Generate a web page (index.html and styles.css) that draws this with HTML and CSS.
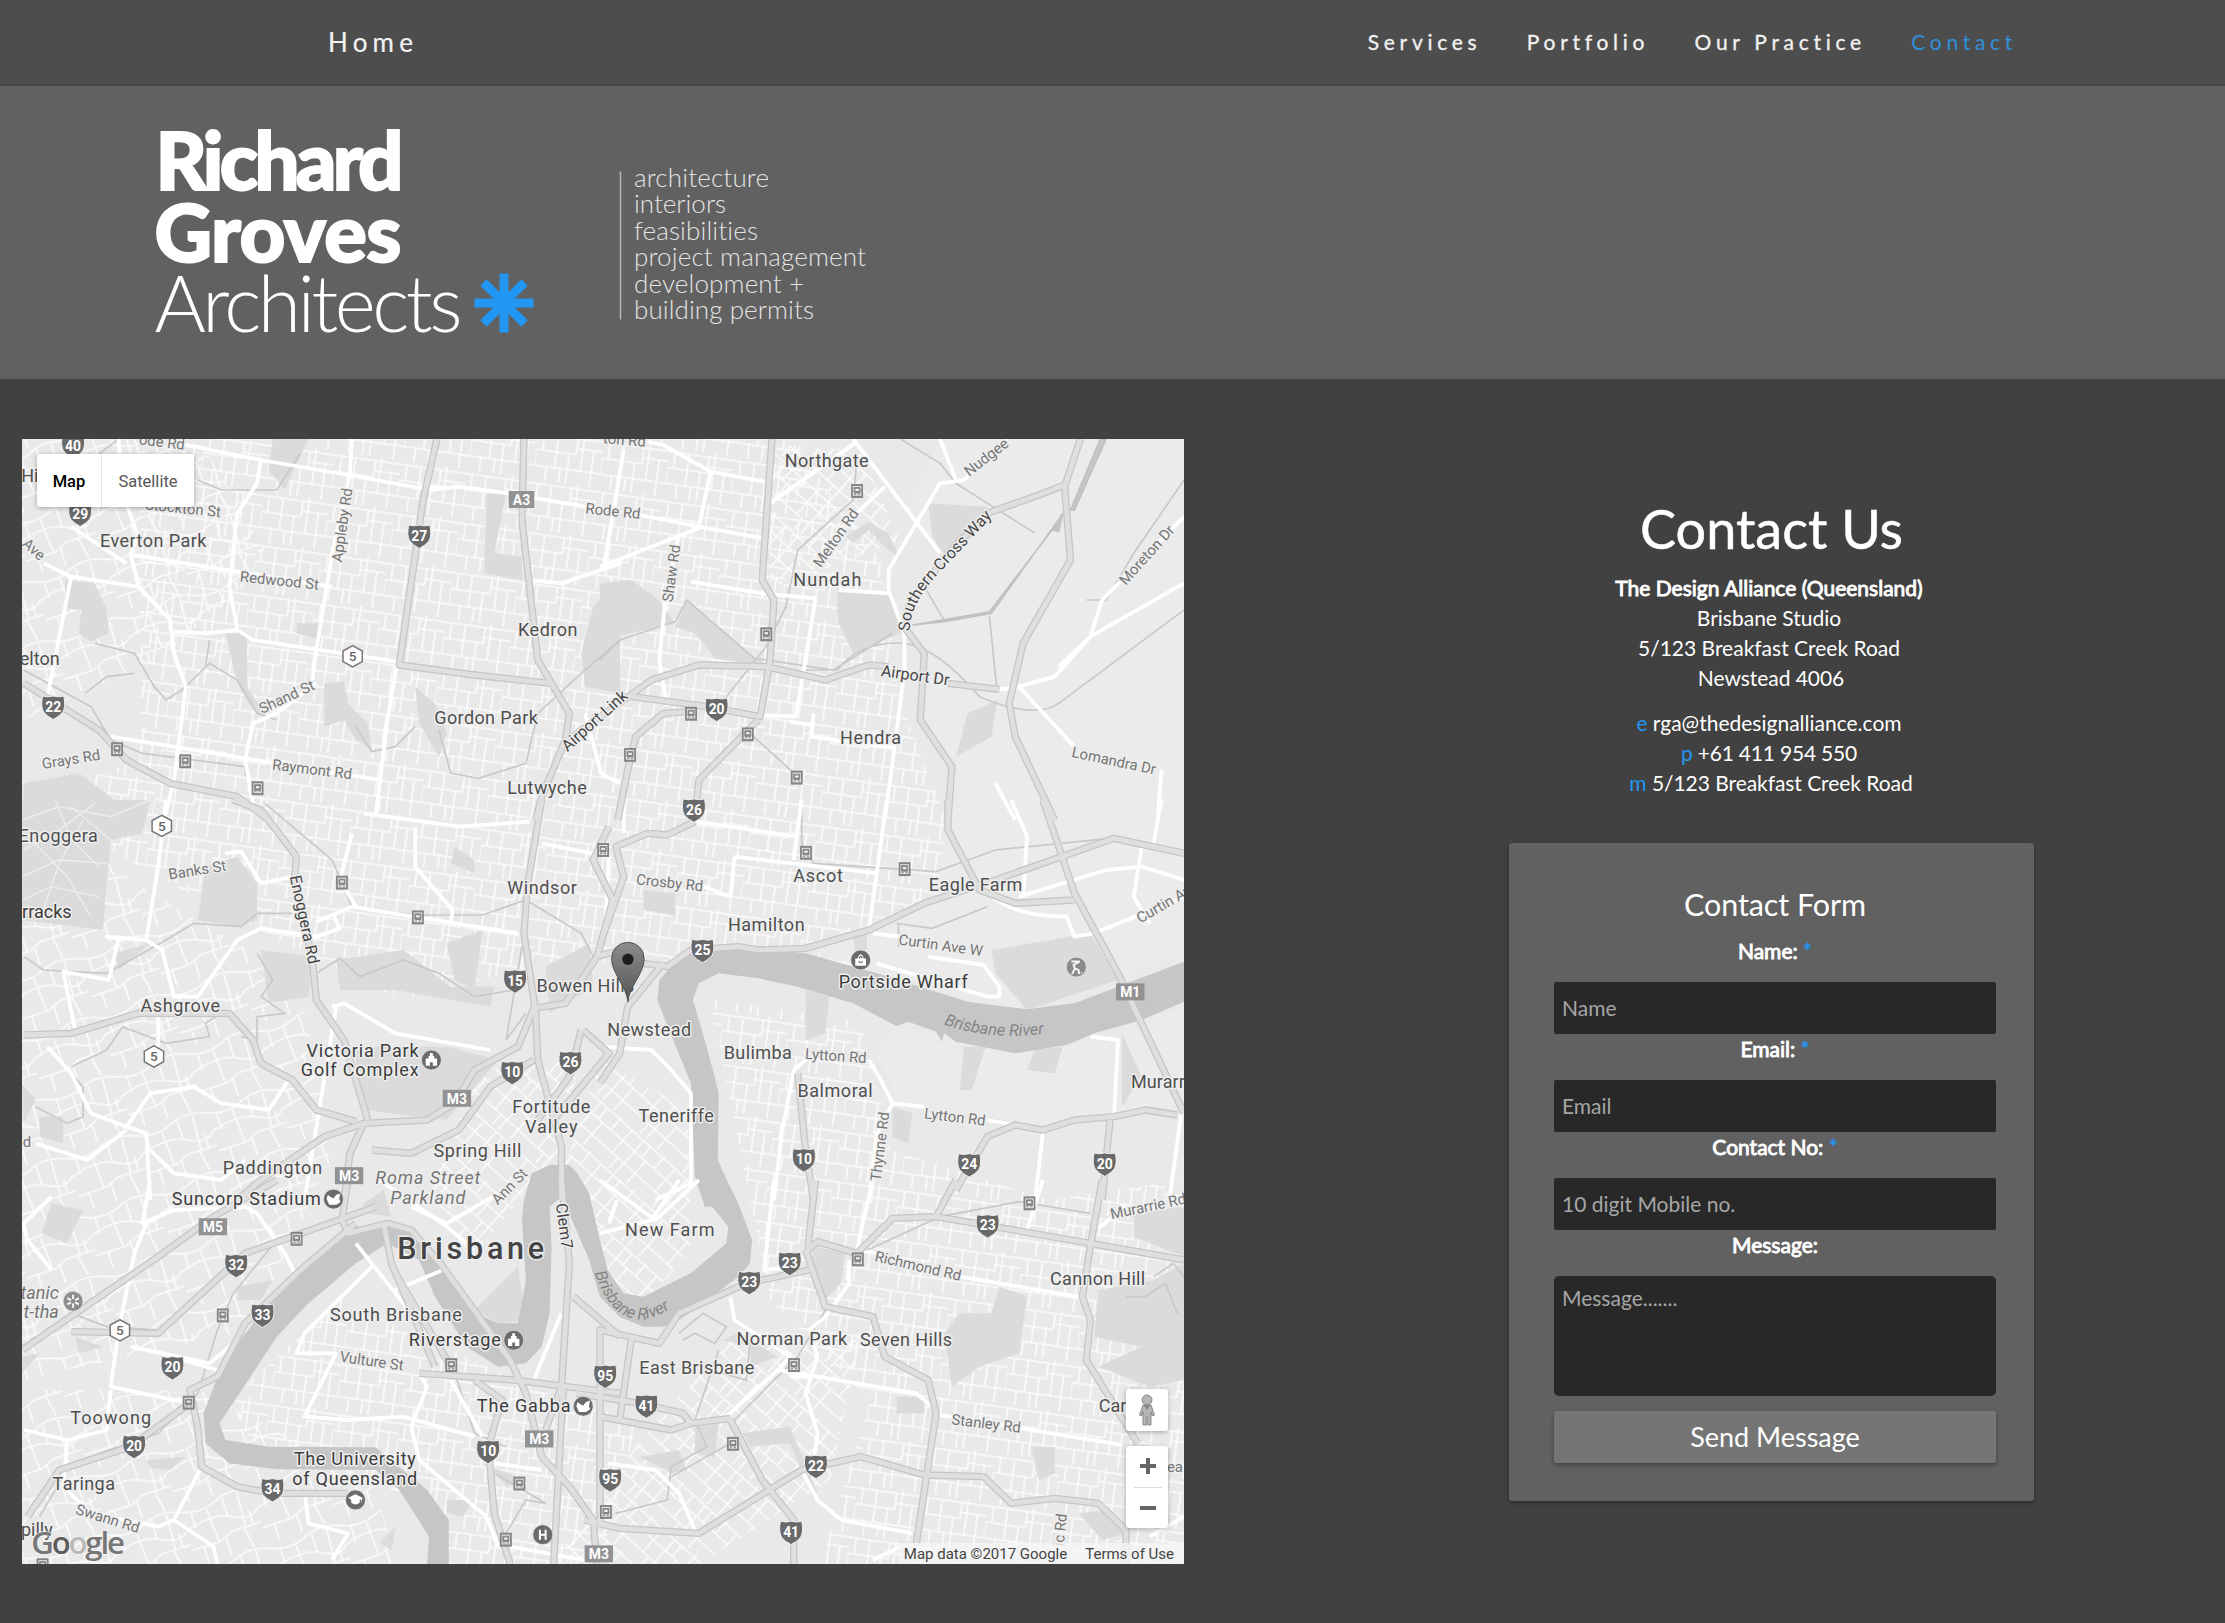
FILE: index.html
```html
<!DOCTYPE html>
<html lang="en">
<head>
<meta charset="utf-8">
<title>Richard Groves Architects - Contact</title>
<link rel="stylesheet" href="styles.css">
</head>
<body>
<nav class="nav">
  <a class="nav-home" href="#">Home</a>
  <div class="nav-links">
    <a href="#">Services</a><a href="#">Portfolio</a><a href="#">Our Practice</a><a class="active" href="#">Contact</a>
  </div>
</nav>
<header class="hero">
  <svg class="logo" width="800" height="293" viewBox="100 86 800 293">
    <g class="logo-bold">
      <text x="155.500" y="189.800" textLength="248" lengthAdjust="spacing">Richard</text>
      <text x="154.500" y="262.300" textLength="247" lengthAdjust="spacing">Groves</text>
    </g>
    <text class="logo-thin" x="154.500" y="332" textLength="308" lengthAdjust="spacing">Architects</text>
    <g class="star"><path d="M504 273.500v59M474.500 303h59M483.500 282.500l41 41M524.500 282.500l-41 41"/></g>
    <path class="rule" d="M620.500 171.500v148"/>
    <g class="services">
      <text x="634" y="187" textLength="135">architecture</text>
      <text x="634" y="213" textLength="92">interiors</text>
      <text x="634" y="239.500" textLength="124">feasibilities</text>
      <text x="634" y="266" textLength="232">project management</text>
      <text x="634" y="292.500" textLength="170">development +</text>
      <text x="634" y="318.600" textLength="180">building permits</text>
    </g>
  </svg>
</header>
<main class="main">
  <section class="map">
    <svg class="map-canvas" width="1162" height="1125" viewBox="22 439 1162 1125">
      <defs>
        <pattern id="s1" width="66" height="50" patternUnits="userSpaceOnUse" patternTransform="rotate(8)"><path class="st" d="M0 4H66M0 20H40M40 14H66M0 36H66M6 4V20M20 4V36M33 20V50M46 0V36M57 14V50M12 36V50M40 4V20M26 36V50M0 20V36"/></pattern>
        <pattern id="s2" width="58" height="46" patternUnits="userSpaceOnUse" patternTransform="rotate(42)"><path class="st" d="M0 3H58M0 17H58M0 33H58M8 3V33M24 3V46M39 17V46M50 0V17M16 33V46M33 3V17"/></pattern>
        <pattern id="s3" width="74" height="62" patternUnits="userSpaceOnUse" patternTransform="rotate(-18)"><path class="st" d="M0 6Q20 14 37 6T74 6M0 26Q30 16 48 26T74 26M0 46H30L44 40H74M10 10V26M26 11L28 46M44 5V24M60 4L58 40M12 46V62M36 43V62M56 40L60 62M66 26V40"/></pattern>
        <path id="shield" d="M-10-10Q-5-8.500 0-10Q5-8.500 10-10Q12 0 9 5Q6 9 0 12Q-6 9-9 5Q-12 0-10-10z"/>
        <path id="hex" d="M0-11L10-5.500V5.500L0 11L-10 5.500V-5.500z"/>
        <g id="train"><rect x="-6" y="-7" width="12" height="14" fill="#858585"/><rect x="-4.200" y="-5" width="8.400" height="9.800" fill="#e9e9e9"/><path d="M-3-3.500H3V2H-3zM-3 3.500h2M1 3.500h2" fill="#858585" stroke="#858585"/><path d="M-1.800-2.200H1.800V0H-1.800z" fill="#eee"/></g>
        <g id="hw">
          <g transform="translate(0 420) scale(.39541 .33333)">
            <path d="M1325 57L1320 300L1345 560L1360 720L1400 800L1440 880L1430 960L1370 1130L1355 1200"/><path d="M1105 57L1070 240L1010 735L1200 765L1390 790"/><path d="M60 790L250 930L320 1020L430 1090L600 1130L680 1200"/>
          </g>
          <g transform="translate(600 420) scale(.39541 .33333)">
            <path d="M435 57L410 480L440 540L430 720L405 890L270 860L80 830"/><path d="M400 900L250 1080L240 1200"/><path d="M230 875L160 880L90 950L70 1050L45 1200"/><path d="M-80 960L0 890L130 780L250 735L420 740L570 780L680 735L730 740M880 790L1010 808"/><path d="M980 280L880 400L780 560L775 630L820 700L810 900L890 1040L880 1200"/><path d="M1215 57L1175 200L1190 420L1070 670L1035 850L1050 950L1150 1200M980 280L1110 225L1175 195"/>
          </g>
          <g transform="translate(0 800) scale(.39541 .33333)">
            <path d="M1370 0L1335 250L1325 400L1355 640L1360 780L1420 1040V1200"/><path d="M1568 450L1510 470L1430 610L1350 625L1310 740L1200 810L1150 910L1080 960L920 970L820 1010L660 1140L600 1200"/><path d="M920 970L885 1060L870 1200"/><path d="M590 0L660 30L750 170L745 230L790 480L800 600L870 720L930 960"/><path d="M60 705L180 700L350 640H580L640 720L660 790L740 840L800 930L900 965"/><path d="M1510 470L1550 300L1500 180L1540 80M1470 690L1440 830L1360 960M1475 690L1540 760L1400 960M1350 780L1240 860L1160 990L1040 1060L940 1050"/>
          </g>
          <g transform="translate(600 800) scale(.39541 .33333)">
            <path d="M880 0V90L960 270L1050 310L1200 300"/><path d="M1120 0L1200 280L1310 520L1477 940"/><path d="M1477 160L1300 115L1000 240L820 310L680 390L520 445L400 450L350 440L230 450L170 500L110 490"/><path d="M240 65L170 105L120 100L40 140L60 230L10 400"/><path d="M900 1170L980 1010L1050 975L1120 990L1200 960L1300 950L1380 930L1460 945"/><path d="M1290 960L1270 1200M500 820L520 1050L540 1200M160 490L70 620L50 760L0 850"/>
          </g>
          <g transform="translate(0 1180) scale(.39541 .33333)">
            <path d="M700 0L540 110L400 230L56 510"/><path d="M880 0L865 120L880 160L980 130L1040 150L1120 260L1290 540L1330 640L1370 830L1440 920L1500 1020L1510 1152"/><path d="M1420 0L1440 250L1420 620L1380 750M1425 620L1400 1152"/><path d="M950 80L880 110L620 220L400 460L180 455"/><path d="M900 130L760 270L620 430L550 590L480 630L500 740L510 860L600 920L690 940L880 940"/><path d="M480 670L330 800L150 870L70 1010"/><path d="M1060 580L1300 600L1568 640M1200 600L1270 660L1235 800L1250 1000L1290 1152"/><path d="M970 130L990 250L1100 560M1000 280L1060 400L1140 560M1568 470L1450 350"/>
          </g>
          <g transform="translate(600 1180) scale(.39541 .33333)">
            <path d="M900 0L850 110L740 115L650 220L550 185L525 210L545 0"/><path d="M850 110L1240 190L1477 240"/><path d="M1270 0L1240 200L1220 350L1240 420L1230 540L1360 790"/><path d="M520 210L570 380L690 410L720 530L830 600L850 700L800 1090"/><path d="M530 270L370 310L200 400L150 490L0 450V1040"/><path d="M80 470L50 720M330 720L410 900L490 1020V1152"/><path d="M-60 640L100 670L210 700L230 730L180 750L0 710M230 730L330 715"/><path d="M-40 1020L50 1045L250 1060L510 870L660 830L820 885L970 890L1040 970L1150 955L1260 970L1330 1050V1152"/>
          </g>
        </g>
      </defs>
      <rect x="22" y="439" width="1162" height="1125" fill="#e9e9e9"/>
      <!-- local streets -->
      <path fill="url(#s1)" d="M140 439H790L880 560L900 700L1000 960L780 970L560 960L400 1000L200 900L22 800L140 760z"/>
      <path fill="url(#s3)" d="M22 439H200L270 560L160 660L22 720zM22 780L130 880L300 980L330 1160L250 1330L22 1380zM22 1390H200L370 1480L400 1564H22z"/>
      <path fill="url(#s2)" d="M770 445L860 450L900 540L770 590zM600 1060L690 1110V1250L640 1310L590 1270L560 1180zM480 1070L580 1060L560 1150L470 1260L430 1190zM740 1330L860 1340L830 1480L700 1564H550L640 1440z"/>
      <path fill="url(#s1)" d="M710 1000L860 1020L890 1150L1050 1200L1184 1180V1564H820L870 1400L770 1300zM340 1300L560 1400L640 1420L600 1564H440L420 1500L250 1440L230 1400z"/>
      <!-- parks and open land -->
      <g class="open">
        <g transform="translate(600 420) scale(.39541 .33333)"><path d="M860 57H1477V1200H900L890 1040L810 900L820 700L770 560L850 400L780 260z"/></g>
        <g transform="translate(600 800) scale(.39541 .33333)"><path d="M890 0H1477V460L1080 630L700 520L520 440L850 300zM750 680L1050 760L1300 710L1477 620V930L1120 980L760 910L700 760z"/></g>
      </g>
      <g class="park">
        <g transform="translate(0 420) scale(.39541 .33333)"><path d="M690 57H780L720 210L680 150zM1230 220H1280L1250 400L1320 410V480L1225 460zM165 480L240 490L270 570L275 640L230 665L200 640L205 570L165 565zM570 640H625V800L680 900L640 870L600 790zM820 790L870 785L880 850L930 910L940 990L900 960L870 900L820 920zM1050 800L1100 850L1130 940L1110 1010L1060 910zM1500 560L1568 480V820L1480 800L1470 700zM60 1090L200 1060L280 1130L320 1200H56zM750 610H810V660L750 640z"/></g>
        <g transform="translate(600 420) scale(.39541 .33333)"><path d="M0 490L80 480L150 540L190 610L40 650L0 720zM220 540L390 710L430 740L290 715L240 640L190 620zM600 515H740L760 640L640 700L600 600zM830 250L980 260V300L880 420L840 350zM930 880L1005 840L990 950L900 1010zM620 350L680 305L730 340L760 420L720 380L680 330L640 370z"/></g>
        <g transform="translate(0 800) scale(.39541 .33333)"><path d="M56 0H380L360 100L280 120L260 390L56 360zM520 200L600 170L650 250V360L600 380L500 360zM290 460L380 430L300 510zM1130 430L1220 390L1200 570L1150 540zM660 450L790 470L780 590L680 610zM850 480L1020 450L1140 560L1250 560L1240 620L1000 570L860 570zM900 740L1130 740L1260 780L1130 960L920 930L900 840zM1380 500L1490 430L1500 560L1390 640zM56 850L90 900L60 970zM100 950H160V1030L100 1010zM1150 140L1200 180V220L1140 190z"/></g>
        <g transform="translate(600 800) scale(.39541 .33333)"><path d="M990 450L1240 400L1310 540L1080 630L1000 520zM520 570L580 590L570 700L520 720zM920 740H975L940 870H910zM1100 750L1170 740L1150 820L1080 810zM740 920L790 940L780 1030L740 1010zM110 270L190 280V345L110 330zM1320 700L1370 830L1320 920zM640 400H675V450H645z"/></g>
        <g transform="translate(0 1180) scale(.39541 .33333)"><path d="M130 70L210 90L170 190L105 160zM600 320L690 300L660 360L600 360zM920 70L970 30L990 110L920 100zM1310 260L1330 420L1260 430L1200 390zM56 530L100 520L56 580zM370 840L470 830L430 870L380 865zM1130 960H1200L1170 1010L1130 1000zM960 1090L1000 1040L990 1110zM1240 860L1330 900L1280 920zM190 470L260 500L200 520z"/></g>
        <g transform="translate(600 1180) scale(.39541 .33333)"><path d="M1010 320L1080 350L1060 520L960 560L890 620L870 460L910 400H990zM1260 330L1400 300L1477 250V600L1390 620L1260 560L1370 500L1250 470zM1350 100L1477 80V230L1350 170zM540 200L620 220L610 310L560 370L530 270zM310 480L380 500V560L450 530L350 460zM100 830L200 810L220 870L180 880zM1210 1000L1290 990L1330 1060L1270 1080zM1090 800H1150V880L1110 900zM360 760L480 740L550 940L520 900L480 790L380 800zM750 650H820V700H750zM240 740L300 730L290 830L240 820z"/></g>
      </g>
      <!-- tracks through the barracks reserve -->
      <g class="trail" transform="translate(0 800) scale(.39541 .33333)"><path d="M56 60L150 20L280 50L380 0M60 150L140 100L240 10M140 0L180 120L250 200M56 230L150 180L270 190M80 120L170 230L230 350M210 60L150 190L100 360M56 300L130 260L250 290M180 20L280 120"/></g>
      <!-- Brisbane River -->
      <g class="river">
        <g transform="translate(600 800) scale(.39541 .33333)"><path d="M165 520L210 455L370 440L520 460L700 520L930 605L1080 628L1200 610L1400 520L1477 485V605L1370 660L1250 700L1180 735L1050 760L900 725L870 700L865 725L850 695L780 665L750 678L640 610L500 560L400 535L300 520L250 550L235 600L260 700L290 830L300 880L298 1080L350 1220H265L240 1130L230 850L185 720L145 600L150 540z"/></g>
        <g transform="translate(0 1180) scale(.39541 .33333)"><path d="M1757-20L1787 60L1842 140L1837 190L1747 280L1627 350L1577 340L1537 270L1517 180L1490 40L1460-20L1440-45H1390L1345-20L1325 60L1320 120L1330 300L1310 430H1260L1200 400L1120 240L1050 150L1000 130L900 150L850 190L700 340L640 430L560 560L515 700L520 790L580 850L700 868L950 870L1010 930L1085 1070L1080 1152H1135V1020L1080 930L950 802L680 800L570 780L555 730L600 650L700 470L780 370L900 250L980 190L1060 240L1100 350L1180 500L1260 560L1330 550L1370 500L1390 400L1395 200L1390 80L1420 50L1450 130L1490 240L1517 350L1567 410L1627 440H1677L1717 420L1767 380L1867 290L1897 250L1902 180L1867 70L1830-20z"/></g>
        <g transform="translate(600 420) scale(.39541 .33333)"><path d="M1265 57H1280L1200 270H1190zM1170 280L1160 335L1145 330zM1165 290L990 580L870 605L790 615L865 600L985 575L1150 320z" stroke="#c0c0c0" stroke-width="1.500"/></g>
      </g>
      <!-- railways and creeks -->
      <g class="rail">
        <g transform="translate(0 420) scale(.39541 .33333)"><path d="M300 57L140 200M500 180L560 210L700 210L760 100M240 670L340 700L390 800L420 840L460 810L530 730L600 780L650 880L700 900M215 820L270 770L340 760M60 750L230 860L280 960L360 1000L620 1040V1070M530 660L520 740M900 920L940 995L1000 980L1050 920M1110 930L1140 1060L1210 1075L1330 1030L1360 880L1470 760L1568 660"/></g>
        <g transform="translate(600 420) scale(.39541 .33333)"><path d="M650 120L640 240L500 390L470 560L420 680L300 860M0 720L50 660L190 605L220 540L390 715L590 750L740 640M370 930L500 1070M520 750H600Q660 660 770 670Q850 680 960 830Q1100 900 1160 850L1477 570M760 57L860 130L900 190L1100 340M985 590L1003 800M820 500L870 600M1477 180L1350 400L1280 540H1230"/></g>
        <g transform="translate(0 800) scale(.39541 .33333)"><path d="M670 10L840 180L890 320L1050 345L1220 345L1330 300L1470 400L1500 470M60 470L110 510L270 520L420 420L490 370L610 380L650 340L740 340M800 520L860 475L910 530L1020 480L1110 520L1200 590L1300 570M650 460L690 540L660 590L720 640L650 650V720L610 710M180 800L270 750L310 680L420 730L530 710L520 670L560 640M90 920L170 970L210 950V860L120 740M1330 640L1280 720L1320 440"/></g>
        <g transform="translate(600 800) scale(.39541 .33333)"><path d="M510 0L510 130L540 190L850 215L1000 150L1290 115M750 370L840 385L980 320M755 370V440"/></g>
        <g transform="translate(0 1180) scale(.39541 .33333)"><path d="M700 180L590 340L550 450L500 640L400 760L180 850L100 1010M180 400L270 440L400 450M1150 580L1200 760L1280 800M1250 880L1380 970L1330 960L1280 1060"/></g>
        <g transform="translate(600 1180) scale(.39541 .33333)"><path d="M640 230L860 110L1060 65L1240 100M570 390L500 530L340 720M200 460L260 400L320 440L290 490L240 460L210 480M380 480L370 600L310 580M300 510L240 720L270 800L180 860L170 960L40 1000M180 890L330 790M1400 290L1450 250L1477 290M1330 350L1380 350L1430 310L1460 400"/></g>
      </g>
      <!-- main streets -->
      <g class="art">
        <g transform="translate(0 420) scale(.39541 .33333)"><path d="M300 57L310 220L350 350L330 400L350 500L430 600L440 700L470 800L440 1080L415 1200M890 57L885 160L840 400L800 690L790 780M470 75L660 120L880 165L1090 210L1160 200L1285 220L1480 260M180 320L320 430M335 405L840 500M110 430L180 470L350 500M180 470L120 830M660 120L650 190L600 280L580 500L600 630M440 635L520 640L600 630L640 660L1005 725L980 900L950 1190M1340 480L1420 490L1568 430M280 950L440 980L620 1015L960 1080M800 790L700 880L640 910L620 1020L640 1150M1480 880L1520 1060L1568 1090M1060 200L1150 205"/></g>
        <g transform="translate(600 420) scale(.39541 .33333)"><path d="M120 65L160 75L280 155L415 185M100 285L250 320L415 355M0 440L250 325M280 155L250 320M60 90L10 440M200 340L165 540L150 720L170 860M230 485L410 520L545 535L515 750L495 890L405 885M430 250L650 65M640 57L860 400M720 200L640 290M1030 57L920 180L860 190L730 450L730 510L770 640V750L745 980L720 1200M605 510L730 520M540 880L535 950L745 985M480 905L535 915M860 57L900 180M1477 290L1270 540L1240 650L1150 770L1060 800L1010 808M1477 490L1240 650L1160 740M1060 800L1200 980M1420 1050L1410 1200M1000 1090L1050 1200"/></g>
        <g transform="translate(0 800) scale(.39541 .33333)"><path d="M420 0L400 200L370 420L270 410L300 415L275 540L160 515L190 690M370 420L410 450L440 590L500 590L600 420L660 385L800 410L860 385L845 350M570 160L610 155L660 250L740 230M800 365L890 320L1310 400M890 100L860 240L900 320M920 40L1160 80L1340 65M1050 80V200L1145 330L1140 370M1370 130L1540 170L1530 400M840 620L870 610L1000 700L1240 750M850 620L770 1200M120 740L180 820L230 940L320 980L370 1000L380 1200M320 980L380 880L490 860L560 910L680 930L730 840M90 1030L220 1080L320 990M400 600V740M380 1050L440 1120L560 1140L620 1080"/></g>
        <g transform="translate(600 800) scale(.39541 .33333)"><path d="M510 0L490 180M340 170L700 220L725 0M245 65L500 110M340 170L330 290L240 250M700 220L680 390M1040 0L1080 110L1070 290M60 0L60 100M1060 290L1280 210L1370 200L1477 240M1370 140L1350 290L1390 370M970 270Q1040 350 1180 350L1200 410L1250 400L1477 290M690 400L760 410M830 470L970 495L1010 560V590L980 590L700 490M490 810L460 1000L440 1200M490 810L530 770M680 780L710 840L740 910L820 920M980 960L1050 975M740 910L700 1000L680 1200M1120 1000L1100 1200M1420 0L1400 130M1470 940L1440 1200M0 740L130 750L180 810L230 880V1150L140 1200M1240 710L1310 720L1300 950"/></g>
        <g transform="translate(0 1180) scale(.39541 .33333)"><path d="M380 0L360 130L440 90L620 80L650 100L720 220L750 290M370 130L340 220L300 450L280 620L460 665M70 190L60 130L130 50M130 270L70 180M960 0L1130 140L1200 210M900 190L1060 430L1140 560M940 260L770 460L750 520L850 520L770 710L880 720L1020 710L1200 770M1060 580L1080 620L1040 740L1060 840L1230 1010L1260 1100M1140 600L1220 770M460 540L550 570M60 750L170 780L270 750L280 630M330 500L530 550L590 490M170 780L160 920L230 1000L400 1040L440 1020L510 860M440 1020L540 1100L550 1152M770 930L780 1030L880 1060L840 1140M1250 850L1370 870M1290 1100L1480 1140M1420 400L1350 600M1000 330L1120 270M1560 60L1540 130M1040 80L1130 130L1260 40"/></g>
        <g transform="translate(600 1180) scale(.39541 .33333)"><path d="M440 0L415 270L500 260M690 0L650 210L700 220M630 240V310L570 410L530 450L550 530L520 640L550 760L540 850M330 350L340 420L480 530L450 570L800 640L840 680M450 570L310 720M860 705L1320 795M910 290L1210 350M1120 0L1080 150M1260 145L1330 80M20 850L140 870L200 940L240 1050M510 870L550 960L610 1020L790 1060M0 160L130 120L200 0M0 0L140 120L250 0M690 1140L760 1100M1390 1070L1477 1010M480 590H540"/></g>
      </g>
      <use href="#hw" class="casing"/>
      <use href="#hw" class="roadway"/>
      <g transform="scale(1.41903)">
        <!-- street names -->
        <g class="lbl-road">
          <text transform="translate(114 312) rotate(7)" y="3">ode Rd</text><text transform="translate(432 360) rotate(6)" y="3.700">Rode Rd</text><text transform="translate(440 310.500) rotate(5)" y="3">ton Rd</text>
          <text transform="translate(129 358) rotate(6)" y="3.700">Stockton St</text><text transform="translate(241 370) rotate(-82)" y="3.700">Appleby Rd</text><text transform="translate(197 409) rotate(6)" y="3.700">Redwood St</text>
          <text transform="translate(24 387) rotate(42)" y="3.700">Ave</text><text transform="translate(202 491) rotate(-25)" y="3.700">Shand St</text><text transform="translate(50 535) rotate(-9)" y="3.700">Grays Rd</text><text transform="translate(220 542) rotate(7)" y="3.700">Raymont Rd</text>
          <text transform="translate(473 404) rotate(-82)" y="3.700">Shaw Rd</text><text transform="translate(589 379) rotate(-55)" y="3.700">Melton Rd</text><text transform="translate(695 322) rotate(-38)" y="3.700">Nudgee</text><text transform="translate(808 391) rotate(-48)" y="3.700">Moreton Dr</text><text transform="translate(785 536) rotate(12)" y="3.700">Lomandra Dr</text>
          <text transform="translate(139 613) rotate(-9)" y="3.700">Banks St</text><text transform="translate(472 622) rotate(6)" y="3.700">Crosby Rd</text><text transform="translate(663 666) rotate(8)" y="3.700">Curtin Ave W</text><text transform="translate(820 637) rotate(-30)" y="3.700">Curtin Av</text>
          <text transform="translate(589 744) rotate(4)" y="3.700">Lytton Rd</text><text transform="translate(673 787) rotate(7)" y="3.700">Lytton Rd</text><text transform="translate(620 808) rotate(-83)" y="3.700">Thynne Rd</text><text transform="translate(809 850) rotate(-12)" y="3.700">Murarrie Rd</text>
          <text transform="translate(647 892) rotate(13)" y="3.700">Richmond Rd</text><text transform="translate(695 1003) rotate(7)" y="3.700">Stanley Rd</text><text transform="translate(262 959) rotate(8)" y="3.700">Vulture St</text><text transform="translate(76 1070) rotate(17)" y="3.700">Swann Rd</text><text transform="translate(359 836) rotate(-45)" y="3.700">Ann St</text><text transform="translate(747 1078) rotate(-84)" y="3.700">ic Rd</text><text x="19" y="808.500">d</text><text x="828" y="1037.500">ea</text>
        </g>
        <g class="lbl-road dark">
          <text transform="translate(419 508) rotate(-42)" y="3.700">Airport Link</text><text transform="translate(645 476) rotate(8)" y="3.700">Airport Dr</text><text transform="translate(214.500 648) rotate(78)" y="3.700">Enoggera Rd</text><text transform="translate(397.500 864) rotate(82)" y="3.700">Clem7</text>
          <path id="scw" d="M641 445Q641 428 657 409L701 362" fill="none"/><text class="on-path"><textPath href="#scw" textLength="102">Southern Cross Way</textPath></text>
        </g>
        <g class="lbl-water">
          <path id="r1" d="M665 722Q700 734 740 728" fill="none"/><text class="on-path"><textPath href="#r1">Brisbane River</textPath></text>
          <path id="r2" d="M419 897Q430 930 453 930Q470 927 486 911" fill="none"/><text class="on-path"><textPath href="#r2">Brisbane River</textPath></text>
        </g>
        <!-- suburbs -->
        <g class="lbl">
          <text x="582.500" y="329.400" textLength="59">Northgate</text><text x="108" y="385.400" textLength="75">Everton Park</text><text x="583" y="413" textLength="48">Nundah</text><text x="386" y="448" textLength="42">Kedron</text><text x="342.500" y="510.400" textLength="73">Gordon Park</text><text x="613.500" y="524.400" textLength="43">Hendra</text><text x="385.500" y="559.200" textLength="56">Lutwyche</text><text x="41" y="593.400" textLength="56">Enoggera</text><text x="382" y="630.200" textLength="49">Windsor</text><text x="576.500" y="621.200" textLength="35">Ascot</text><text x="687.500" y="628.200" textLength="66">Eagle Farm</text><text x="540" y="655.800" textLength="54">Hamilton</text><text x="412.500" y="699" textLength="69">Bowen Hills</text><text x="127" y="713.400" textLength="56">Ashgrove</text><text x="457.500" y="729.800" textLength="59">Newstead</text><text x="534" y="746.200" textLength="48">Bulimba</text><text x="588.500" y="773.200" textLength="53">Balmoral</text><text x="476.500" y="790.500" textLength="53">Teneriffe</text><text x="388.500" y="784.200" textLength="55">Fortitude</text><text x="388.500" y="798.200" textLength="37">Valley</text><text x="336.500" y="815.400" textLength="62">Spring Hill</text><text x="192" y="827" textLength="70">Paddington</text><text x="472" y="871" textLength="63">New Farm</text><text x="773.500" y="905.800" textLength="67">Cannon Hill</text><text x="279" y="931.200" textLength="93">South Brisbane</text><text x="558" y="947.800" textLength="78">Norman Park</text><text x="638.500" y="948.400" textLength="65">Seven Hills</text><text x="491" y="968.400" textLength="81">East Brisbane</text><text x="78" y="1003.200" textLength="57">Toowong</text><text x="59" y="1050.200" textLength="44">Taringa</text><text x="816" y="766.800" textLength="38">Murarr</text><text x="784" y="995.200">Car</text><text x="21" y="340">Hi</text><text x="28" y="468.800">elton</text><text x="26" y="1082.600">pilly</text>
        </g>
        <g class="lbl poi" transform="translate(0 -.2)">
          <text x="636.500" y="696.400" textLength="91">Portside Wharf</text><text x="255.500" y="745" textLength="79">Victoria Park</text><text x="253.500" y="758.600" textLength="83">Golf Complex</text><text x="173.500" y="849.400" textLength="105">Suncorp Stadium</text><text x="320.500" y="949" textLength="65">Riverstage</text><text x="369" y="995.400" textLength="66">The Gabba</text><text x="250" y="1032.400" textLength="86">The University</text><text x="250" y="1046.400" textLength="88">of Queensland</text><text x="33" y="647.400">rracks</text>
        </g>
        <g class="lbl green" transform="translate(0 -.2)"><text x="301.500" y="834.600" textLength="74">Roma Street</text><text x="301.500" y="848.600" textLength="53">Parkland</text><text x="28" y="915.400">tanic</text><text x="29" y="929.200">t-tha</text></g>
        <text class="city" x="332.500" y="887" textLength="105">Brisbane</text>
        <!-- stations -->
        <g><use href="#train" transform="translate(604 346) scale(.7)"/><use href="#train" transform="translate(540 447) scale(.7)"/><use href="#train" transform="translate(487 503) scale(.7)"/><use href="#train" transform="translate(527 517.500) scale(.7)"/><use href="#train" transform="translate(444 532) scale(.7)"/><use href="#train" transform="translate(561.500 548) scale(.7)"/><use href="#train" transform="translate(82.500 528) scale(.7)"/><use href="#train" transform="translate(130.500 536.500) scale(.7)"/><use href="#train" transform="translate(181.500 555.500) scale(.7)"/><use href="#train" transform="translate(425 599) scale(.7)"/><use href="#train" transform="translate(568 601) scale(.7)"/><use href="#train" transform="translate(637.500 612.500) scale(.7)"/><use href="#train" transform="translate(241 622) scale(.7)"/><use href="#train" transform="translate(294.500 646.500) scale(.7)"/><use href="#train" transform="translate(209 873) scale(.7)"/><use href="#train" transform="translate(157 927) scale(.7)"/><use href="#train" transform="translate(133 988.500) scale(.7)"/><use href="#train" transform="translate(318 962) scale(.7)"/><use href="#train" transform="translate(366 1045.500) scale(.7)"/><use href="#train" transform="translate(356.500 1085) scale(.7)"/><use href="#train" transform="translate(427 1065.500) scale(.7)"/><use href="#train" transform="translate(516.500 1017.500) scale(.7)"/><use href="#train" transform="translate(559.500 962) scale(.7)"/><use href="#train" transform="translate(604.500 887.500) scale(.7)"/><use href="#train" transform="translate(725.500 848) scale(.7)"/><use href="#train" transform="translate(30 1103) scale(.7)"/></g>
        <!-- route shields -->
        <g class="shield">
          <g transform="translate(51.500 314)"><use href="#shield" transform="scale(.75)"/><text y="3.600">40</text></g><g transform="translate(56.500 362)"><use href="#shield" transform="scale(.75)"/><text y="3.600">29</text></g><g transform="translate(295.500 377.500)"><use href="#shield" transform="scale(.75)"/><text y="3.600">27</text></g><g transform="translate(37.500 498)"><use href="#shield" transform="scale(.75)"/><text y="3.600">22</text></g><g transform="translate(505 499.500)"><use href="#shield" transform="scale(.75)"/><text y="3.600">20</text></g><g transform="translate(489 570.500)"><use href="#shield" transform="scale(.75)"/><text y="3.600">26</text></g><g transform="translate(363 691)"><use href="#shield" transform="scale(.75)"/><text y="3.600">15</text></g><g transform="translate(495 669.500)"><use href="#shield" transform="scale(.75)"/><text y="3.600">25</text></g><g transform="translate(402 748.500)"><use href="#shield" transform="scale(.75)"/><text y="3.600">26</text></g><g transform="translate(361 755.500)"><use href="#shield" transform="scale(.75)"/><text y="3.600">10</text></g><g transform="translate(566.500 817)"><use href="#shield" transform="scale(.75)"/><text y="3.600">10</text></g><g transform="translate(683 820.500)"><use href="#shield" transform="scale(.75)"/><text y="3.600">24</text></g><g transform="translate(778.500 820)"><use href="#shield" transform="scale(.75)"/><text y="3.600">20</text></g><g transform="translate(696 863.500)"><use href="#shield" transform="scale(.75)"/><text y="3.600">23</text></g><g transform="translate(556.500 890)"><use href="#shield" transform="scale(.75)"/><text y="3.600">23</text></g><g transform="translate(528 903.500)"><use href="#shield" transform="scale(.75)"/><text y="3.600">23</text></g><g transform="translate(166.500 891.500)"><use href="#shield" transform="scale(.75)"/><text y="3.600">32</text></g><g transform="translate(185 926.500)"><use href="#shield" transform="scale(.75)"/><text y="3.600">33</text></g><g transform="translate(121.500 963.500)"><use href="#shield" transform="scale(.75)"/><text y="3.600">20</text></g><g transform="translate(94.500 1019)"><use href="#shield" transform="scale(.75)"/><text y="3.600">20</text></g><g transform="translate(192 1049.500)"><use href="#shield" transform="scale(.75)"/><text y="3.600">34</text></g><g transform="translate(344 1022.500)"><use href="#shield" transform="scale(.75)"/><text y="3.600">10</text></g><g transform="translate(426.500 969.500)"><use href="#shield" transform="scale(.75)"/><text y="3.600">95</text></g><g transform="translate(430 1042.500)"><use href="#shield" transform="scale(.75)"/><text y="3.600">95</text></g><g transform="translate(455.500 990.500)"><use href="#shield" transform="scale(.75)"/><text y="3.600">41</text></g><g transform="translate(557.500 1079.500)"><use href="#shield" transform="scale(.75)"/><text y="3.600">41</text></g><g transform="translate(575 1033)"><use href="#shield" transform="scale(.75)"/><text y="3.600">22</text></g>
        </g>
        <g class="hex">
          <g transform="translate(248.500 462.500)"><use href="#hex" transform="scale(.68)"/><text y="3.400">5</text></g><g transform="translate(114 582)"><use href="#hex" transform="scale(.68)"/><text y="3.400">5</text></g><g transform="translate(108.500 744.500)"><use href="#hex" transform="scale(.68)"/><text y="3.400">5</text></g><g transform="translate(84.500 937.500)"><use href="#hex" transform="scale(.68)"/><text y="3.400">5</text></g>
        </g>
        <g class="mway">
          <g transform="translate(367.500 352)"><path d="M-9-6H9V6H-9z"/><text y="3.700">A3</text></g><g transform="translate(322 774)"><path d="M-10-6H10V6H-10z"/><text y="3.700">M3</text></g><g transform="translate(246 828.500)"><path d="M-10-6H10V6H-10z"/><text y="3.700">M3</text></g><g transform="translate(150 864.500)"><path d="M-10-6H10V6H-10z"/><text y="3.700">M5</text></g><g transform="translate(796.500 699)"><path d="M-10-6H10V6H-10z"/><text y="3.700">M1</text></g><g transform="translate(380 1014)"><path d="M-10-6H10V6H-10z"/><text y="3.700">M3</text></g><g transform="translate(422 1095)"><path d="M-10-6H10V6H-10z"/><text y="3.700">M3</text></g>
        </g>
        <!-- places of interest -->
        <g class="pin">
          <g transform="translate(304 747)"><circle r="7"/><path d="M-4 4V-1H-2V-3H-1V-5H1V-3H2V-1H4V4H1V1.500H-1V4z"/></g><g transform="translate(362 944.500)"><circle r="7"/><path d="M-4 4V-1H-2V-3H-1V-5H1V-3H2V-1H4V4H1V1.500H-1V4z"/></g>
          <g transform="translate(235 845)"><circle r="7"/><path d="M-4.800 0L-4-3L-2-1.500L0-.5L2-3L4.800-4L4 0L5 2L2 4H-3z"/></g><g transform="translate(411 991)"><circle r="7"/><path d="M-4.800 0L-4-3L-2-1.500L0-.5L2-3L4.800-4L4 0L5 2L2 4H-3z"/></g>
          <g transform="translate(606.500 676.500)"><circle r="7"/><path d="M-3.800-1H-2V-2Q0-6 2-2V-1H3.800V4H-3.800z"/><path class="ink" d="M-1.200-1.200Q0-4 1.200-1.200M-1.500 1Q0 2.800 1.500 1"/></g>
          <g transform="translate(758.500 681.500)" opacity=".72"><circle r="7"/><path class="chalk" d="M-3.500-4H2.500M2.500-4L-2-1.500L-1 1L1.500 2L2 5M-1 1L-3 5M3.500 4h.5"/></g>
          <g transform="translate(51.500 917)" opacity=".72"><circle r="7"/><path class="chalk" d="M0-4.500V-1.500M0 1.500V4.500M-4-2.200L-1.500-.8M1.500 .8L4 2.200M-4 2.200L-1.500 .8M1.500-.8L4-2.200"/></g>
          <g transform="translate(250.500 1057)"><circle r="7"/><path d="M-5-1.500L0-4L5-1.500L4 2.500V-.5L3 0V2Q0 4.500-3 2V0z"/></g>
          <g transform="translate(382.500 1081.500)"><circle r="7" fill="#4d4d4d"/><path class="chalk" d="M-2-3.500V3.500M2-3.500V3.500M-2 0H2"/></g>
        </g>
        <!-- office marker -->
        <g transform="translate(442.500 677)"><path d="M0 29C-1 18-11.500 9-11.500-1.500A11.500 11.500 0 0 1 11.500-1.500C11.500 9 1 18 0 29z" fill="url(#mk)" stroke="#3d3d3d" stroke-width=".8"/><circle cy="-1" r="4" fill="#1d1d1d"/></g>
        <linearGradient id="mk" x1="0" y1="0" x2="0" y2="1"><stop offset="0" stop-color="#8c8c8c"/><stop offset="1" stop-color="#555"/></linearGradient>
        <text class="gl" x="22" y="1095" textLength="66">G<tspan fill="#5d5d5d">o</tspan><tspan fill="#b9b9b9">o</tspan><tspan>g</tspan><tspan>l</tspan><tspan>e</tspan></text>
      </g>
    </svg>
    <div class="map-type"><span class="on">Map</span><span>Satellite</span></div>
    <div class="map-ctl">
      <div class="ctl pegman"><svg width="18" height="32" viewBox="0 0 18 32"><path d="M5 11H13L16.500 21L14.500 22L13 18V31H9.700V23H8.300V31H5V18L3.500 22L1.500 21z" fill="#b5b5b5" stroke="#777" stroke-width=".8"/><path d="M5.500 11h7L9 16z" fill="#888"/><circle cx="9" cy="6" r="5" fill="#b5b5b5" stroke="#777" stroke-width=".8"/></svg></div>
      <div class="ctl zoom"><svg width="16" height="16" viewBox="0 0 16 16"><path d="M8 0V16M0 8H16"/></svg><i></i><svg width="16" height="16" viewBox="0 0 16 16"><path d="M0 8H16"/></svg></div>
    </div>
    <div class="map-foot"><span>Map data ©2017 Google</span><span>Terms of Use</span></div>
  </section>
  <section class="contact">
    <h1>Contact Us</h1>
    <address>
      <p><b>The Design Alliance (Queensland)</b><br>Brisbane Studio<br>5/123 Breakfast Creek Road<br><span class="nudge">Newstead 4006</span></p>
      <p><em>e</em> rga@thedesignalliance.com<br><span class="phone"><em>p</em> +61 411 954 550</span><br><span class="nudge"><em>m</em> 5/123 Breakfast Creek Road</span></p>
    </address>
    <form class="card">
      <h2>Contact Form</h2>
      <label>Name: <em>*</em></label>
      <input type="text" placeholder="Name">
      <label>Email: <em>*</em></label>
      <input type="text" placeholder="Email">
      <label>Contact No: <em>*</em></label>
      <input type="text" placeholder="10 digit Mobile no.">
      <label>Message:</label>
      <textarea placeholder="Message......."></textarea>
      <button type="button">Send Message</button>
    </form>
  </section>
</main>
</body>
</html>
```
FILE: styles.css
```css
* { box-sizing: border-box; }
html, body { margin: 0; }
body { width: 2225px; height: 1623px; overflow: hidden; background: #414141; color: #fff; font: 21px/30px Lato, sans-serif; font-variant-ligatures: none; }
a { color: #f2f2f2; text-decoration: none; }
em { font-style: normal; color: #2196f3; }

.nav { height: 86px; background: #4d4d4d; border-bottom: 2px solid #494949; display: flex; justify-content: space-between; align-items: center; padding: 0 208px 0 328px; }
.nav-home { font-size: 26px; letter-spacing: 5.200px; -webkit-text-stroke: .2px; }
.nav-links { display: flex; gap: 45.500px; font-size: 21px; letter-spacing: 4.700px; }
.nav-links a { -webkit-text-stroke: .3px; }
.nav-links .active { color: #2f8fdd; -webkit-text-stroke: 0; }

.hero { height: 293px; background: #616161; padding-left: 100px; }
.logo { display: block; }
.logo text { fill: #fff; }
.logo .logo-bold text { font-size: 79.500px; font-weight: 900; stroke: #fff; stroke-width: 2px; }
.logo-thin { font-size: 78.500px; font-weight: 300; }
.services { font-size: 26px; font-weight: 300; }
.logo .services text { fill: #e4e4e4; }
.star path { stroke: #2196f3; stroke-width: 9; fill: none; }
.rule { stroke: #b5b5b5; stroke-width: 1.500; }

.main { display: flex; padding: 60px 0 0 22px; }

/* map */
.map { position: relative; width: 1162px; height: 1125px; overflow: hidden; flex: none; font-family: Roboto, sans-serif; }
.map-canvas { display: block; font-family: Roboto, sans-serif; }
.map-canvas path { vector-effect: non-scaling-stroke; }
.st { fill: none; stroke: #fbfbfb; stroke-width: 1.700; }
.open { fill: #ebebeb; }
.park { fill: #dbdbdb; }
.trail { fill: none; stroke: #ededed; stroke-width: 1.400; }
.river { fill: #c6c6c6; }
.rail { fill: none; stroke: #c9c9c9; stroke-width: 1.700; }
.art { fill: none; stroke: #fff; stroke-width: 3.800; stroke-linejoin: round; }
.casing { fill: none; stroke: #c6c6c6; stroke-width: 7.400; stroke-linejoin: round; }
.roadway { fill: none; stroke: #dfdfdf; stroke-width: 4.800; stroke-linejoin: round; }
.map-canvas text { text-anchor: middle; paint-order: stroke; stroke-linejoin: round; }
.map-canvas .on-path { text-anchor: start; }
.lbl, .lbl-road { stroke: #efefef; stroke-width: 2px; }
.lbl { font-size: 12.700px; fill: #4f4f4f; }
.poi { fill: #3c3c3c; }
.green { font-style: italic; fill: #757575; }
.lbl-road { font-size: 10.500px; fill: #757575; }
.lbl-road path, .lbl-water path { stroke: none; }
.dark { font-size: 11.300px; fill: #444; }
.lbl-water { font-size: 11.600px; fill: #858585; font-style: italic; }
.city { font-size: 21.500px; font-weight: 500; fill: #444; stroke: #efefef; stroke-width: 2px; letter-spacing: 1.500px; }
.shield { fill: #696969; stroke: #eee; stroke-width: 1; }
.shield text, .mway text { fill: #fff; stroke: none; font-size: 9.800px; font-weight: 700; }
.hex { fill: #fff; stroke: #777; stroke-width: 1.500; }
.hex text { fill: #666; stroke: none; font-size: 9.600px; font-weight: 500; }
.mway { fill: #929292; }
.pin circle { fill: #6b6b6b; stroke: #eee; stroke-width: .4; }
.pin path { fill: #fff; }
.pin .chalk { fill: none; stroke: #fff; stroke-width: 2; }
.pin .ink { fill: none; stroke: #6b6b6b; stroke-width: 1.200; }
.map-canvas .gl { font: 600 22px "Open Sans", sans-serif; fill: #777; text-anchor: start; stroke: #f6f6f6; stroke-width: 1px; }

.map-type { position: absolute; left: 15px; top: 15px; display: flex; height: 53px; background: #fff; border-radius: 3px; box-shadow: 0 1px 5px rgba(0,0,0,.3); font-size: 16.500px; line-height: 55px; color: #565656; }
.map-type span { width: 92px; text-align: center; }
.map-type .on { width: 65px; color: #000; font-weight: 500; border-right: 1px solid #e0e0e0; }
.map-ctl { position: absolute; right: 16px; top: 950px; display: grid; gap: 15px; }
.ctl { width: 42px; background: #fff; border-radius: 3px; box-shadow: 0 1px 5px rgba(0,0,0,.3); display: flex; flex-direction: column; align-items: center; }
.pegman { height: 42px; justify-content: center; }
.zoom { height: 82px; justify-content: space-evenly; padding-left: 2px; }
.zoom i { width: 28px; height: 1px; background: #ddd; }
.zoom path { stroke: #666; stroke-width: 4; }
.map-foot { position: absolute; right: 0; bottom: 0; height: 21px; display: flex; gap: 18px; padding: 0 10px 0 6px; background: rgba(245,245,245,.75); color: #444; font-size: 15px; line-height: 22px; }

/* contact column */
.contact { width: 525px; margin-left: 325px; text-align: center; }
h1 { margin: 58px 0 0; font-weight: 400; font-size: 54px; line-height: 64px; -webkit-text-stroke: .5px; }
address { font-style: normal; margin: 12px 5px 0 0; }
p { margin: 0 0 15px; }
.nudge { padding-left: 4px; letter-spacing: -.050px; }
.phone { letter-spacing: -.200px; }
b, label { font-weight: 400; -webkit-text-stroke: .9px; }
label em { -webkit-text-stroke: .4px; }
.card { margin-top: 45px; height: 658px; padding: 41px 38px 0 45px; background: #616161; border-radius: 3px; box-shadow: 0 2px 4px rgba(0,0,0,.35); display: flex; flex-direction: column; }
h2 { margin: 0 0 12px; font-weight: 400; font-size: 30.500px; line-height: 40px; letter-spacing: -.1px; }
label { height: 46px; display: block; line-height: 30px; }
input, textarea, button { font: 21px/30px Lato, sans-serif; color: #fff; border: 0; display: block; width: 100%; height: 52px; padding: 0 8px 2px; background: #282828; border-radius: 2px; }
input::placeholder, textarea::placeholder { color: #a6a6a6; opacity: 1; }
textarea { height: 120px; padding: 7px 8px; border-radius: 5px; resize: none; }
button { margin-top: 15px; background: #757575; font-size: 27px; padding-bottom: 1px; box-shadow: 0 2px 4px rgba(0,0,0,.35); }
```
